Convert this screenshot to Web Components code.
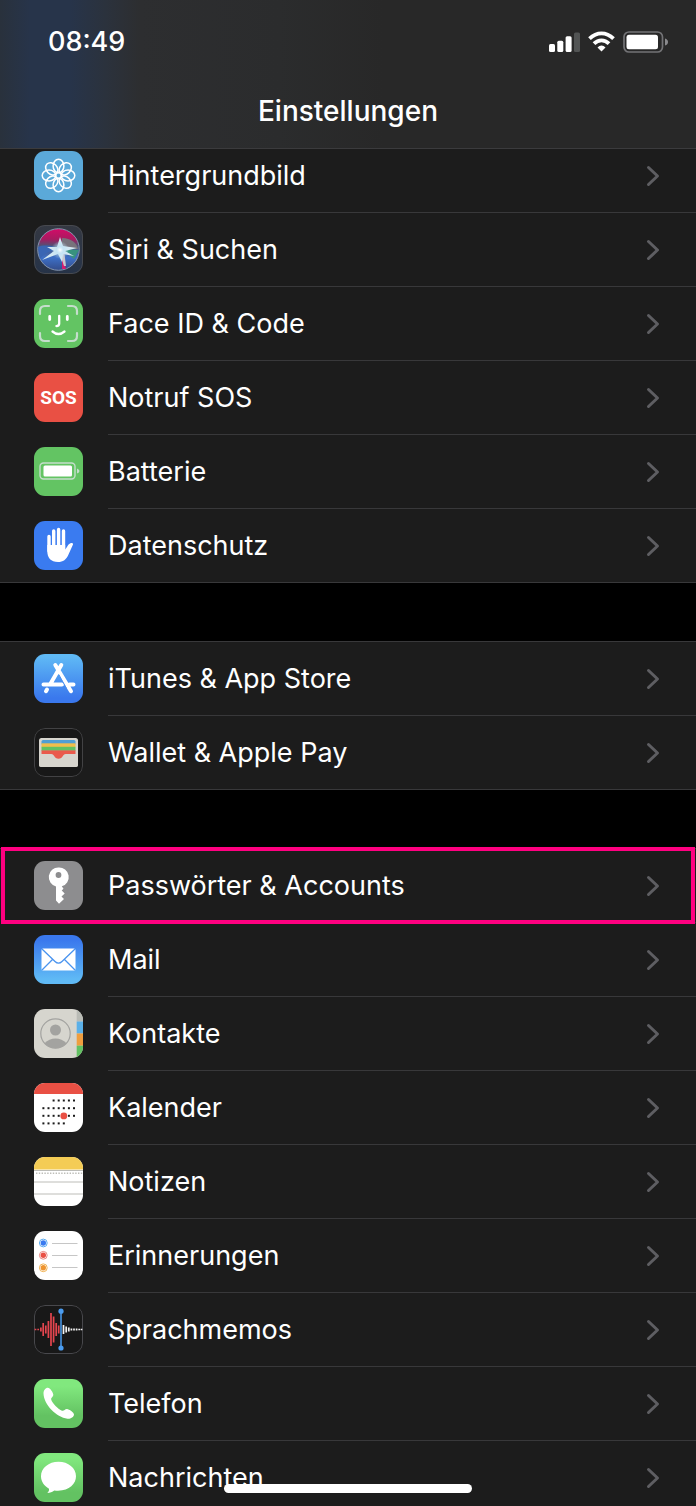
<!DOCTYPE html>
<html lang="de">
<head>
<meta charset="utf-8">
<meta name="viewport" content="width=device-width, initial-scale=1">
<title>Einstellungen</title>
<style>
  body {
    margin: 0;
    background-color: #000;
    color: #fff;
    font-family: Inter, "Liberation Sans", sans-serif;
  }
</style>
</head>
<body>
<settings-screen>
  <status-bar slot="header">08:49</status-bar>
  <nav-title slot="header">Einstellungen</nav-title>

  <settings-group continued>
    <settings-row icon="wallpaper">Hintergrundbild</settings-row>
    <settings-row icon="siri">Siri &amp; Suchen</settings-row>
    <settings-row icon="faceid">Face ID &amp; Code</settings-row>
    <settings-row icon="sos">Notruf SOS</settings-row>
    <settings-row icon="battery">Batterie</settings-row>
    <settings-row icon="privacy">Datenschutz</settings-row>
  </settings-group>

  <settings-group>
    <settings-row icon="appstore">iTunes &amp; App Store</settings-row>
    <settings-row icon="wallet">Wallet &amp; Apple Pay</settings-row>
  </settings-group>

  <settings-group>
    <settings-row icon="key" marked>Passwörter &amp; Accounts</settings-row>
    <settings-row icon="mail">Mail</settings-row>
    <settings-row icon="contacts">Kontakte</settings-row>
    <settings-row icon="calendar">Kalender</settings-row>
    <settings-row icon="notes">Notizen</settings-row>
    <settings-row icon="reminders">Erinnerungen</settings-row>
    <settings-row icon="voicememos">Sprachmemos</settings-row>
    <settings-row icon="phone">Telefon</settings-row>
    <settings-row icon="messages">Nachrichten</settings-row>
  </settings-group>
</settings-screen>

<script>
// Helpers for the icons that repeat one shape
const petals = [0, 45, 90, 135, 180, 225, 270, 315]
  .map(a => `<ellipse cx="24.5" cy="15" rx="5.4" ry="6.8" transform="rotate(${a} 24.5 24.5)"/>`)
  .join('');

const calendarDots = [[2, 7, 17.5], [0, 7, 25.2], [0, 7, 32.8], [0, 5, 40.4]]
  .map(([from, to, y]) => {
    let row = '';
    for (let i = from; i < to; i++) {
      row += `<rect x="${8.4 + i * 5.1}" y="${y - 1}" width="2" height="2"/>`;
    }
    return row;
  })
  .join('');

const bars = (list, color) => list
  .map(([x, h]) => `<path d="M${x} ${24.5 - h / 2}v${h}" stroke="${color}" stroke-width="1.7"/>`)
  .join('');

const ICONS = {
  wallpaper: `
    <rect width="49" height="49" fill="#5ba9d9"/>
    <g fill="none" stroke="#fff" stroke-width="1.5">${petals}<circle cx="24.5" cy="24.5" r="3"/></g>`,
  siri: `
    <defs>
      <linearGradient id="s1" x2="0" y2="1"><stop offset="0" stop-color="#343842"/><stop offset="1" stop-color="#263348"/></linearGradient>
      <linearGradient id="s2" x2="0" y2="1"><stop offset="0" stop-color="#d40b68"/><stop offset=".25" stop-color="#a81a60"/><stop offset=".42" stop-color="#4c5577"/><stop offset=".7" stop-color="#3d6fc6"/><stop offset="1" stop-color="#334c8a"/></linearGradient>
      <radialGradient id="s3"><stop offset="0" stop-color="#fff"/><stop offset=".4" stop-color="#bfe2f5" stop-opacity=".7"/><stop offset="1" stop-color="#bfe2f5" stop-opacity="0"/></radialGradient>
    </defs>
    <rect width="49" height="49" fill="url(#s1)"/>
    <circle cx="24.5" cy="24.5" r="20.8" fill="url(#s2)" stroke="#8595ad" stroke-width="1"/>
    <path d="M28 13C37 13 43 18 44 24L27 24z" fill="#77727b"/>
    <path d="M4 22C11 19 20 21 26 24C19 25 10 28 6 34z" fill="#3a66b4"/>
    <path d="M27 24L45 25 40 34z" fill="#38927e"/>
    <path d="M28 30L32 44 28 44z" fill="#d31d70"/>
    <path d="M25 26L30 41 32 41 30 25z" fill="#c9c5cc"/>
    <path d="M26 12L29 21 43 23 31 26 40 31 29 29 28 37 24 29 8 35 20 26 13 22 23 22z" fill="#d4e8f2"/>
    <circle cx="26" cy="25" r="9" fill="url(#s3)"/>
    <rect x=".5" y=".5" width="48" height="48" rx="10.5" fill="none" stroke="#47494e"/>`,
  faceid: `
    <rect width="49" height="49" fill="#63c463"/>
    <g fill="none" stroke="#c5ddcc" stroke-width="2.2" stroke-linecap="round">
      <path d="M6 15v-3q0-5 5-5h4M34 7h4q5 0 5 5v3M43 34v3q0 5-5 5h-4M15 42h-4q-5 0-5-5v-3"/>
    </g>
    <g fill="none" stroke="#fff" stroke-width="2.8" stroke-linecap="round">
      <path d="M15.7 17.500v3M33.3 17.500v3"/>
      <path d="M25.200 16.800v7.800q0 2.500-2.800 2.500M18.500 32.500q6 5 12 0" stroke-width="2.300"/>
    </g>`,
  sos: `
    <rect width="49" height="49" fill="#e95044"/>
    <text x="24.5" y="31" text-anchor="middle" font-family="Roboto, 'Liberation Sans', sans-serif" font-weight="700" font-size="19" fill="#fff">SOS</text>`,
  battery: `
    <rect width="49" height="49" fill="#63c463"/>
    <rect x="6" y="16" width="35" height="16" rx="3.5" fill="none" stroke="#c5ddcc" stroke-width="1.4"/>
    <rect x="9.5" y="18.500" width="28.500" height="11" rx="1.5" fill="#fff"/>
    <path d="M43 21.500q2.500 1 2.500 2.500t-2.500 2.500z" fill="#c5ddcc"/>`,
  privacy: `
    <rect width="49" height="49" fill="#3a7bf0"/>
    <g fill="none" stroke="#fff" stroke-width="3.4" stroke-linecap="round">
      <path d="M15 15.500V30M19.700 10V28M24.600 8.500V28M29.500 10V28"/>
    </g>
    <path d="M13.300 24H31.200V28.500C33 26.500 34 23 36.500 22.200 38 21.800 39.400 22.400 39 23.500L34.500 33.500C32.500 38.500 29 41 24 41 17 41 13.300 37 13.300 30z" fill="#fff"/>`,
  appstore: `
    <defs><linearGradient id="a" x2="0" y2="1"><stop offset=".05" stop-color="#5fb9f5"/><stop offset=".9" stop-color="#3a78ed"/></linearGradient></defs>
    <rect width="49" height="49" fill="url(#a)"/>
    <g fill="none" stroke="#fff" stroke-width="4" stroke-linecap="round">
      <path d="M27.300 11L16.500 29.700M21.300 11L37 37.200M9.500 30.600H28M35.500 30.600H39.500M13 35.500L12 37.200"/>
    </g>
    <path d="M24.800 20.500L32.500 34.500" stroke="#4a90ef" stroke-width="1"/>`,
  wallet: `
    <rect x=".5" y=".5" width="48" height="48" rx="10.5" fill="#181818" stroke="#424244"/>
    <rect x="5" y="10" width="39" height="29" rx="2.5" fill="#d7d5ce"/>
    <rect x="7.5" y="12" width="34" height="5" rx="1.5" fill="#4f9fd4"/>
    <rect x="7.5" y="15.300" width="34" height="4" fill="#f1be4b"/>
    <rect x="7.5" y="18.800" width="34" height="4" fill="#62c162"/>
    <rect x="7.5" y="22.400" width="34" height="4" fill="#ea5a4c"/>
    <path d="M5 26h12q2 0 3 2 1.500 3 4.500 3t4.500-3q1-2 3-2h12v10.500q0 2.500-2.500 2.500h-34Q5 39 5 36.500z" fill="#d7d5ce"/>
    <path d="M17 25.800q2 0 3 2 1.500 3 4.500 3t4.500-3q1-2 3-2z" fill="#ea5a4c"/>`,
  key: `
    <rect width="49" height="49" fill="#8d8d8f"/>
    <path d="M24.500 6.500a9.600 9.600 0 0 0-2.500 18.900V39.500l3 3.200 5-4.700-2.500-2.600 3.200-2.900-3-3 1.800-1.700-1.700-2.500A9.600 9.600 0 0 0 24.500 6.500z" fill="#fff"/>
    <circle cx="24.5" cy="14" r="2.900" fill="#8d8d8f"/>`,
  mail: `
    <defs><linearGradient id="m" x2="0" y2="1"><stop offset=".1" stop-color="#3a78ed"/><stop offset=".9" stop-color="#5fb9f5"/></linearGradient></defs>
    <rect width="49" height="49" fill="url(#m)"/>
    <rect x="7.5" y="13.500" width="34" height="22" rx="1.5" fill="#fff"/>
    <g fill="none" stroke="#4a94ef" stroke-width="1.300">
      <path d="M8 14L21 26.500q3.500 3.300 7 0L41 14M8 35L18.500 24.500M41 35L30.500 24.500"/>
    </g>`,
  contacts: `
    <rect width="49" height="49" fill="#d6d5ce"/>
    <rect x="42.700" y="0" width="7" height="12.500" fill="#b9bbb5"/>
    <rect x="42.700" y="12.500" width="7" height="12" fill="#5bb0e8"/>
    <rect x="42.700" y="24.500" width="7" height="12.200" fill="#ef9e3f"/>
    <rect x="42.700" y="36.700" width="7" height="12.300" fill="#62c162"/>
    <circle cx="21.500" cy="24.500" r="14.700" fill="none" stroke="#a3a3a0" stroke-width="1.200"/>
    <circle cx="21.500" cy="21" r="5.500" fill="#a3a3a0"/>
    <path d="M10.500 34.300Q15 29.500 21.500 29.500T32.500 34.300Q28.500 39.200 21.500 39.200T10.500 34.300z" fill="#a3a3a0"/>`,
  calendar: `
    <rect width="49" height="49" fill="#fff"/>
    <rect width="49" height="11" fill="#e95044"/>
    <g fill="#1a1a1a">${calendarDots}</g>
    <circle cx="29.800" cy="32.900" r="3.400" fill="#e95044"/>`,
  notes: `
    <rect width="49" height="49" fill="#fff"/>
    <rect width="49" height="12.500" fill="#f4cc55"/>
    <path d="M0 13.500H49M0 25H49M0 37H49" stroke="#bdbdb8"/>
    <path d="M2 16.200H49" stroke="#bdbdb8" stroke-width="1.400" stroke-dasharray="1.400 1.400"/>`,
  reminders: `
    <rect width="49" height="49" fill="#fff"/>
    <g fill="none" stroke-width="1">
      <circle cx="9.300" cy="12" r="3.900" stroke="#5cacf0"/>
      <circle cx="9.300" cy="24.300" r="3.900" stroke="#e98a84"/>
      <circle cx="9.300" cy="36.800" r="3.900" stroke="#f0b354"/>
    </g>
    <circle cx="9.300" cy="12" r="2.700" fill="#3a7bf0"/>
    <circle cx="9.300" cy="24.300" r="2.700" fill="#e95044"/>
    <circle cx="9.300" cy="36.800" r="2.700" fill="#ee9430"/>
    <path d="M18 12.500H43.500M18 24.500H43.500M18 36.500H43.500" stroke="#c6c6c6"/>`,
  voicememos: `
    <rect x=".5" y=".5" width="48" height="48" rx="10.5" fill="#181818" stroke="#48484c"/>
    ${bars([[1.5, 1.5], [4.2, 1.5], [6.9, 4], [9.2, 13], [11.8, 8], [14.4, 17], [17, 33], [19.6, 26], [22.2, 13], [24.7, 8]], '#e5464f')}
    ${bars([[29.5, 9], [32.2, 6], [34.8, 4], [37.4, 2], [40, 2], [42.6, 2], [45.2, 1.5], [47.5, 1.5]], '#f2f2f2')}
    <path d="M27 6V43" stroke="#4a9cf0" stroke-width="1.500"/>
    <circle cx="27" cy="6.200" r="2.600" fill="#4a9cf0"/>
    <circle cx="27" cy="43" r="2.600" fill="#4a9cf0"/>`,
  phone: `
    <defs><linearGradient id="p" x2="0" y2="1"><stop offset=".15" stop-color="#81e87e"/><stop offset=".75" stop-color="#63c262"/></linearGradient></defs>
    <rect width="49" height="49" fill="url(#p)"/>
    <path d="M9.500 14.500C9.500 11.500 11.500 8.800 13.800 8.800 16 8.800 19.300 13.500 19.300 15.700 19.300 17.800 16.800 18.500 17.200 20.500 18 24 24.500 30.500 28 31.700 30 32.300 31 29.800 33 30 35.200 30.300 40 33.500 40 35.500 39.800 38.300 36.500 40 33.500 39.700 22.500 38.500 9.800 25.500 9.500 14.500z" fill="#fff"/>`,
  messages: `
    <defs><linearGradient id="n" x2="0" y2="1"><stop offset=".1" stop-color="#81e87e"/><stop offset=".8" stop-color="#63c262"/></linearGradient></defs>
    <rect width="49" height="49" fill="url(#n)"/>
    <path d="M24.500 8.700C14.700 8.700 7 15 7 23.300 7 28.700 10.200 33 15 35.700 15.300 37.300 14.700 38.800 13.300 40 16 39.900 18.500 38.800 20.300 37.500 34 39.200 42 31.500 42 23.300 42 15 34.300 8.700 24.500 8.700z" fill="#fff"/>`
};

class SettingsScreen extends HTMLElement {
  constructor() {
    super();
    this.attachShadow({ mode: 'open' });
    this.shadowRoot.innerHTML = this.getTemplate();
  }

  getTemplate() {
    return `
      <style>
        :host {
          display: block;
          position: relative;
          height: 100vh;
          overflow: hidden;
        }

        header {
          position: relative;
          z-index: 1;
          background: linear-gradient(90deg, #29313c 0, #27344a 30px, #27344a 70px, #2b323d 105px, #2d2e30 140px, #2b2c2d 40%, #282828 55%);
          border-bottom: 1px solid #3b3b3d;
        }

        /* The list is scrolled a little way under the header */
        main {
          display: flex;
          flex-direction: column;
          gap: 58px;
          margin-top: -10px;
        }

        .home-indicator {
          position: absolute;
          z-index: 2;
          left: 50%;
          bottom: 13px;
          width: 248px;
          height: 9px;
          border-radius: 5px;
          background-color: #fff;
          transform: translateX(-50%);
        }
      </style>
      <header><slot name="header"></slot></header>
      <main><slot></slot></main>
      <div class="home-indicator"></div>
    `;
  }
}

class StatusBar extends HTMLElement {
  constructor() {
    super();
    this.attachShadow({ mode: 'open' });
    this.shadowRoot.innerHTML = this.getTemplate();
  }

  getTemplate() {
    return `
      <style>
        :host {
          display: flex;
          align-items: center;
          justify-content: space-between;
          padding: 24px 28px 0 48px;
          font-size: 27px;
          font-weight: 500;
          line-height: 36px;
        }

        .indicators {
          display: flex;
          align-items: center;
          gap: 8px;
        }

        svg {
          display: block;
        }
      </style>
      <slot></slot>
      <div class="indicators">
        <svg width="31" height="22" viewBox="0 0 31 22" fill="#fff">
          <rect x="0" y="13" width="6" height="8" rx="1.5"/>
          <rect x="8.300" y="9.700" width="6" height="11.300" rx="1.500"/>
          <rect x="16.600" y="5.300" width="6" height="15.700" rx="1.500"/>
          <rect x="25" y="1.500" width="6" height="19.500" rx="1.500" fill="#525454"/>
        </svg>
        <svg width="27" height="22" viewBox="0 0 27 22" fill="none" stroke="#fff" stroke-width="3.800">
          <path d="M1.500 7.700Q7 2.400 13.500 2.400T25.500 7.700"/>
          <path d="M6 12.600Q9.300 9.300 13.500 9.300T21 12.600"/>
          <path d="M9.500 16.500Q11.300 14.500 13.500 14.500T17.500 16.500L13.500 20.600z" fill="#fff" stroke="none"/>
        </svg>
        <svg width="45" height="22" viewBox="0 0 45 22">
          <rect x="1" y="1" width="38.500" height="20" rx="5" fill="none" stroke="#737376" stroke-width="1.700"/>
          <rect x="3.500" y="3.700" width="31.500" height="14.600" rx="2.500" fill="#fff"/>
          <path d="M42 7.500q3 1 3 3.500t-3 3.500z" fill="#8a8a8d"/>
        </svg>
      </div>
    `;
  }
}

class NavTitle extends HTMLElement {
  constructor() {
    super();
    this.attachShadow({ mode: 'open' });
    this.shadowRoot.innerHTML = `
      <style>
        :host {
          display: block;
          padding: 33px 16px 19px;
          text-align: center;
        }

        h1 {
          margin: 0;
          font-size: 28px;
          font-weight: 500;
          line-height: 36px;
        }
      </style>
      <h1><slot></slot></h1>
    `;
  }
}

class SettingsGroup extends HTMLElement {
  constructor() {
    super();
    this.attachShadow({ mode: 'open' });
    this.shadowRoot.innerHTML = `
      <style>
        :host {
          display: block;
          background-color: #1c1c1c;
          border-top: 1px solid #38383a;
        }

        /* Its top edge is out of view */
        :host([continued]) {
          border-top: none;
        }
      </style>
      <slot></slot>
    `;
  }
}

class AppIcon extends HTMLElement {
  constructor() {
    super();
    this.attachShadow({ mode: 'open' });
  }

  connectedCallback() {
    this.shadowRoot.innerHTML = `
      <style>
        :host {
          display: block;
          flex: none;
          width: 49px;
          height: 49px;
          border-radius: 11px;
          overflow: hidden;
        }

        svg {
          display: block;
        }
      </style>
      <svg width="49" height="49" viewBox="0 0 49 49">${ICONS[this.getAttribute('name')]}</svg>
    `;
  }
}

class SettingsRow extends HTMLElement {
  constructor() {
    super();
    this.attachShadow({ mode: 'open' });
  }

  connectedCallback() {
    this.shadowRoot.innerHTML = this.getTemplate();
  }

  getTemplate() {
    return `
      <style>
        :host {
          display: block;
          position: relative;
        }

        a {
          display: flex;
          gap: 25px;
          padding-left: 34px;
          color: inherit;
          text-decoration: none;
        }

        app-icon {
          margin-top: 12px;
        }

        .content {
          display: flex;
          flex: 1;
          align-items: center;
          justify-content: space-between;
          min-height: 73px;
          padding-right: 36px;
          border-bottom: 1px solid #38383a;
          font-size: 27px;
          line-height: 36px;
        }

        :host(:last-child) a {
          border-bottom: 1px solid #38383a;
        }

        :host(:last-child) .content {
          border-bottom: none;
        }

        /* Frame drawn over the row and its neighbouring lines */
        :host([marked])::after {
          content: "";
          position: absolute;
          z-index: 1;
          inset: -2px 1px -1px;
          border: 4px solid #ff0080;
          pointer-events: none;
        }
      </style>
      <a href="#${this.getAttribute('icon')}">
        <app-icon name="${this.getAttribute('icon')}"></app-icon>
        <span class="content">
          <slot></slot>
          <svg width="14" height="22" viewBox="0 0 14 22" fill="none" stroke="#5e5e62" stroke-width="3" stroke-linecap="round" stroke-linejoin="round"><path d="M2.500 2.500L11.500 11 2.500 19.500"/></svg>
        </span>
      </a>
    `;
  }
}

customElements.define('settings-screen', SettingsScreen);
customElements.define('status-bar', StatusBar);
customElements.define('nav-title', NavTitle);
customElements.define('settings-group', SettingsGroup);
customElements.define('app-icon', AppIcon);
customElements.define('settings-row', SettingsRow);
</script>
</body>
</html>
